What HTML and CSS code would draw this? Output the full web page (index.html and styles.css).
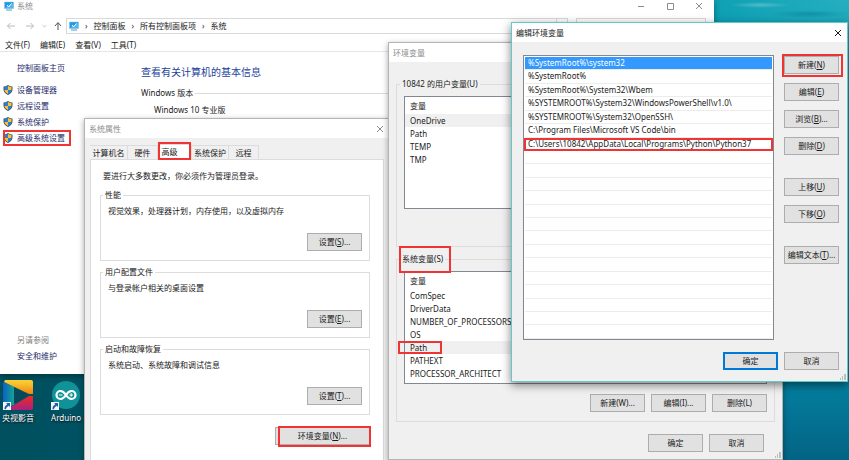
FILE: index.html
```html
<!DOCTYPE html>
<html lang="zh-CN">
<head>
  <meta charset="UTF-8">
  <title>编辑环境变量</title>
  <link rel="stylesheet" href="styles.css">
</head>
<body>

  <svg class="defs" width="0" height="0" aria-hidden="true">
    <symbol id="monitor" viewBox="0 0 20 18">
      <path d="M1 1h18v13H1z" fill="#1e9be8" stroke="#8fb8d4"/>
      <path d="M2 13L18 3v10z" fill="#54b6f0"/>
      <path d="M6 7l3 4 6-7" fill="none" stroke="#fff" stroke-width="2"/>
      <path d="M4 17h12" stroke="#4d9fd4" stroke-width="2"/>
    </symbol>
    <symbol id="shield" viewBox="0 0 20 20">
      <path d="M10 0C7 2 4 3 1 3v6c0 5 4 9 9 11 5-2 9-6 9-11V3c-3 0-6-1-9-3z" fill="#33567f"/>
      <path d="M10 2C8 3 5 4 3 4v6h7z" fill="#2f80cf"/>
      <path d="M10 2c2 1 5 2 7 2v6h-7z" fill="#f8c22c"/>
      <path d="M3 10h7v8c-4-2-7-5-7-8z" fill="#f8c22c"/>
      <path d="M10 10h7c0 3-3 6-7 8z" fill="#2f80cf"/>
    </symbol>
    <symbol id="close" viewBox="0 0 10 10">
      <path d="M2 2l6 6M8 2l-6 6" fill="none" stroke="currentColor"/>
    </symbol>
    <symbol id="shortcut" viewBox="0 0 8 8">
      <path d="M0 0h8v8H0z" fill="#f4f7fa"/>
      <path d="M3 1h4v4L5.7 3.7C4.3 4.5 3.3 5.500 3 7.200H1.5C1.3 5 2.5 3.3 4.3 2.3z" fill="#1d5fae"/>
    </symbol>
  </svg>

  <main class="desktop">

    <div class="shortcuts">
      <a class="shortcut" href="#">
        <svg viewBox="0 0 30 30">
          <defs>
            <linearGradient id="gy" x2="0" y2="1"><stop stop-color="#fcd737"/><stop offset="1" stop-color="#ef8410"/></linearGradient>
            <linearGradient id="gr" x2="0" y2="1"><stop stop-color="#f02a23"/><stop offset="1" stop-color="#a82281"/></linearGradient>
            <linearGradient id="gb"><stop stop-color="#0b62c4"/><stop offset="1" stop-color="#17a98d"/></linearGradient>
          </defs>
          <path d="M0 2l12 5v17L2 30H0z" fill="url(#gb)"/>
          <path d="M11 6l14 9-14 9z" fill="#06495c"/>
          <path d="M2 0h26a2 2 0 0 1 2 2v12L26 14 1 2z" fill="url(#gy)"/>
          <path d="M30 16v12a2 2 0 0 1-2 2H3L26 16z" fill="url(#gr)"/>
          <use href="#shortcut" x="0" y="22" width="8" height="8"/>
        </svg>
        <span>央视影音</span>
      </a>
      <a class="shortcut" href="#">
        <svg viewBox="0 0 30 30">
          <circle cx="15" cy="15" r="14" fill="#109299"/>
          <path d="M15 15c-2-3-3-4-5.5-4a4 4 0 0 0 0 8c2.5 0 3.5-1 5.5-4s3-4 5.5-4a4 4 0 0 1 0 8C18 19 17 18 15 15z" fill="none" stroke="#fff" stroke-width="2.2"/>
          <path d="M8 15h3.5M18.5 15H22M20.2 13.2v3.5" stroke="#fff"/>
          <use href="#shortcut" x="0" y="22" width="8" height="8"/>
        </svg>
        <span>Arduino</span>
      </a>
    </div>

    <section class="window system">
      <header class="titlebar">
        <svg class="icon"><use href="#monitor"/></svg>
        <h2>系统</h2>
        <button class="caption" aria-label="最小化"><svg viewBox="0 0 10 10"><path d="M2 5.5h6" stroke="currentColor"/></svg></button>
        <button class="caption" aria-label="最大化"><svg viewBox="0 0 10 10"><path d="M2.5 2.5h6v6h-6z" fill="none" stroke="currentColor"/></svg></button>
        <button class="caption" aria-label="关闭"><svg><use href="#close"/></svg></button>
      </header>
      <div class="addressbar">
        <button class="nav" aria-label="后退"><svg viewBox="0 0 10 10"><path d="M9 5H1.5M4.5 2l-3 3 3 3"/></svg></button>
        <button class="nav" aria-label="前进"><svg viewBox="0 0 10 10"><path d="M1 5h7.5M5.5 2l3 3-3 3"/></svg></button>
        <button class="nav recent" aria-label="最近"><svg viewBox="0 0 10 10"><path d="M3 4l2 2 2-2"/></svg></button>
        <button class="nav up" aria-label="向上"><svg viewBox="0 0 10 10"><path d="M5 9V2M2 5l3-3.5L8 5"/></svg></button>
        <nav class="crumbs">
          <svg class="icon"><use href="#monitor"/></svg>
          <i>›</i><a href="#">控制面板</a>
          <i>›</i><a href="#">所有控制面板项</a>
          <i>›</i><a href="#">系统</a>
          <button class="refresh" aria-label="刷新"></button>
        </nav>
        <input class="search" type="search" aria-label="搜索控制面板">
      </div>
      <div class="menubar">
        <button>文件(F)</button>
        <button>编辑(E)</button>
        <button>查看(V)</button>
        <button>工具(T)</button>
      </div>
      <div class="system-body">
        <aside class="sidebar">
          <a class="home" href="#">控制面板主页</a>
          <a href="#"><svg class="icon"><use href="#shield"/></svg>设备管理器</a>
          <a href="#"><svg class="icon"><use href="#shield"/></svg>远程设置</a>
          <a href="#"><svg class="icon"><use href="#shield"/></svg>系统保护</a>
          <a class="mark mark-link" href="#"><svg class="icon"><use href="#shield"/></svg>高级系统设置</a>
          <p class="see-also">另请参阅</p>
          <a class="plain" href="#">安全和维护</a>
        </aside>
        <article class="info">
          <h1>查看有关计算机的基本信息</h1>
          <h3>Windows 版本</h3>
          <p>Windows 10 专业版</p>
        </article>
      </div>
    </section>

    <section class="window props">
      <header class="titlebar">
        <h2>系统属性</h2>
        <button class="caption" aria-label="关闭"><svg><use href="#close"/></svg></button>
      </header>
      <div class="tabs">
        <button>计算机名</button>
        <button>硬件</button>
        <button class="active mark mark-tab">高级</button>
        <button>系统保护</button>
        <button>远程</button>
      </div>
      <div class="tab-page">
        <p class="notice">要进行大多数更改，你必须作为管理员登录。</p>
        <fieldset>
          <legend>性能</legend>
          <p>视觉效果，处理器计划，内存使用，以及虚拟内存</p>
          <button class="btn">设置(<u>S</u>)...</button>
        </fieldset>
        <fieldset>
          <legend>用户配置文件</legend>
          <p>与登录帐户相关的桌面设置</p>
          <button class="btn">设置(<u>E</u>)...</button>
        </fieldset>
        <fieldset>
          <legend>启动和故障恢复</legend>
          <p>系统启动、系统故障和调试信息</p>
          <button class="btn">设置(<u>T</u>)...</button>
        </fieldset>
        <button class="btn env-btn mark mark-env">环境变量(<u>N</u>)...</button>
      </div>
    </section>

    <section class="window vars">
      <header class="titlebar">
        <h2>环境变量</h2>
      </header>
      <div class="vars-body">
        <fieldset>
          <legend>10842 的用户变量(U)</legend>
          <div class="table-box">
            <table>
              <thead><tr><th>变量</th></tr></thead>
              <tbody>
                <tr class="selected"><td>OneDrive</td></tr>
                <tr><td>Path</td></tr>
                <tr><td>TEMP</td></tr>
                <tr><td>TMP</td></tr>
              </tbody>
            </table>
          </div>
        </fieldset>
        <fieldset>
          <legend class="mark mark-legend">系统变量(S)</legend>
          <div class="table-box">
            <table>
              <thead><tr><th>变量</th></tr></thead>
              <tbody>
                <tr><td>ComSpec</td></tr>
                <tr><td>DriverData</td></tr>
                <tr><td>NUMBER_OF_PROCESSORS</td></tr>
                <tr><td>OS</td></tr>
                <tr class="selected"><td><span class="mark mark-path">Path</span></td></tr>
                <tr><td>PATHEXT</td></tr>
                <tr><td>PROCESSOR_ARCHITECT</td></tr>
              </tbody>
            </table>
          </div>
          <div class="actions">
            <button class="btn">新建(W)...</button>
            <button class="btn">编辑(I)...</button>
            <button class="btn">删除(L)</button>
          </div>
        </fieldset>
        <div class="actions confirm">
          <button class="btn">确定</button>
          <button class="btn">取消</button>
        </div>
      </div>
      <svg class="grip" viewBox="0 0 6 6"><path d="M4 0h2v6H4zM2 2h1v4H2zM0 4h1v2H0z"/></svg>
    </section>

    <section class="window edit">
      <header class="titlebar">
        <h2>编辑环境变量</h2>
        <button class="caption" aria-label="关闭"><svg><use href="#close"/></svg></button>
      </header>
      <div class="edit-body">
        <ul class="paths">
          <li class="current">%SystemRoot%\system32</li>
          <li>%SystemRoot%</li>
          <li>%SystemRoot%\System32\Wbem</li>
          <li>%SYSTEMROOT%\System32\WindowsPowerShell\v1.0\</li>
          <li>%SYSTEMROOT%\System32\OpenSSH\</li>
          <li>C:\Program Files\Microsoft VS Code\bin</li>
          <li class="mark mark-row">C:\Users\10842\AppData\Local\Programs\Python\Python37</li>
          <li></li><li></li><li></li><li></li><li></li><li></li><li></li>
          <li></li><li></li><li></li><li></li><li></li><li></li><li></li>
        </ul>
        <div class="side-buttons">
          <button class="btn mark mark-new">新建(<u>N</u>)</button>
          <button class="btn">编辑(<u>E</u>)</button>
          <button class="btn">浏览(<u>B</u>)...</button>
          <button class="btn">删除(<u>D</u>)</button>
          <button class="btn spaced">上移(<u>U</u>)</button>
          <button class="btn">下移(<u>O</u>)</button>
          <button class="btn spaced">编辑文本(<u>T</u>)...</button>
        </div>
      </div>
      <div class="actions confirm">
        <button class="btn default">确定</button>
        <button class="btn">取消</button>
      </div>
      <svg class="grip" viewBox="0 0 6 6"><path d="M4 0h2v6H4zM2 2h1v4H2zM0 4h1v2H0z"/></svg>
    </section>

  </main>

</body>
</html>
```

FILE: styles.css
```css
* {
  box-sizing: border-box;
  margin: 0;
  padding: 0;
}

body {
  font: 8px/12px "Noto Sans", "Noto Sans CJK SC", sans-serif;
  color: #1a1a1a;
}

button,
input {
  font: inherit;
  color: inherit;
  background: none;
  border: 0;
}

a {
  color: inherit;
  text-decoration: none;
}

h1, h2, h3, th {
  font-weight: normal;
  font-size: inherit;
}

.defs {
  position: absolute;
}

.desktop {
  position: relative;
  height: 100vh;
  overflow: hidden;
  background:
    radial-gradient(ellipse 30px 3px at 760px 5px, rgba(255, 255, 255, 0.25), transparent),
    radial-gradient(ellipse 40px 4px at 810px 14px, rgba(0, 110, 140, 0.4), transparent),
    radial-gradient(ellipse 140px 60px at 100% 0, rgba(60, 190, 205, 0.5), transparent),
    linear-gradient(90deg, #00505f 0, #00566a 40%, transparent 85%),
    linear-gradient(#0ea0b4, #0791ac 50%, #047c9c 85%, #036384);
}

.icon {
  width: 10px;
  height: 10px;
  flex: none;
}

/* desktop shortcuts */
.shortcuts {
  position: absolute;
  left: 0;
  top: 380px;
  display: flex;
  gap: 12px;
}

.shortcut {
  width: 36px;
  display: flex;
  flex-direction: column;
  align-items: center;
  gap: 2px;
  color: #fff;
  text-shadow: 0 1px 2px #000;
}

.shortcut svg {
  width: 30px;
  height: 30px;
}

/* windows */
.window {
  position: absolute;
  display: flex;
  flex-direction: column;
  background: #f0f0f0;
  border: 1px solid #b4b4b4;
  box-shadow: 0 2px 6px rgba(0, 0, 0, 0.35);
}

.titlebar {
  display: flex;
  align-items: center;
  height: 19px;
  padding: 0 4px;
  background: #fff;
  color: #8c8c8c;
  flex: none;
}

.titlebar h2 {
  flex: 1;
}

.caption {
  display: flex;
}

.caption svg {
  width: 10px;
  height: 10px;
}

.btn {
  min-width: 55px;
  height: 18px;
  border: 1px solid #adadad;
  background: #e1e1e1;
  white-space: nowrap;
}

.btn.default {
  border: 2px solid #0078d7;
}

.actions {
  display: flex;
  justify-content: flex-end;
  gap: 6px;
}

.grip {
  position: absolute;
  right: 1px;
  bottom: 1px;
  width: 6px;
  height: 6px;
  fill: #bdbdbd;
}

fieldset {
  border: 1px solid #dcdcdc;
}

legend {
  padding: 0 2px;
}

/* red highlight boxes */
.mark {
  position: relative;
}

.mark::after {
  content: "";
  position: absolute;
  border: 2px solid #f03434;
  pointer-events: none;
}

.mark-link::after {
  inset: 0 14px 0 3px;
}

.mark-tab::after {
  inset: -3px 0 -1px;
}

.mark-env::after {
  inset: -2px -2px -3px 2px;
}

.mark-legend::after {
  inset: -7px -6px -8px -1px;
}

.mark-path::after {
  inset: -1px -15px -1px -12px;
}

.mark-row::after {
  inset: 0 -1px -1px;
}

.mark-new::after {
  inset: -3px -5px -4px -3px;
}

/* control panel window */
.system {
  left: 0;
  top: 0;
  width: 714px;
  height: 374px;
  background: #fff;
  border: 0;
}

.system .titlebar {
  height: 12px;
  gap: 3px;
  padding-right: 10px;
}

.system .caption {
  margin-left: 16px;
}

.addressbar {
  display: flex;
  align-items: center;
  height: 16px;
  margin-top: 6px;
  padding: 0 8px 0 6px;
}

.nav {
  width: 19px;
  display: flex;
  color: #bbb;
}

.nav svg {
  width: 10px;
  height: 10px;
  fill: none;
  stroke: currentColor;
}

.nav.recent {
  width: 9px;
  margin-left: -4px;
}

.nav.up {
  width: 13px;
  margin-left: 4px;
  color: #555;
}

.crumbs {
  flex: 1;
  display: flex;
  align-items: center;
  gap: 6px;
  height: 16px;
  padding-left: 2px;
  border: 1px solid #d9d9d9;
}

.crumbs i {
  font-style: normal;
}

.refresh {
  width: 11px;
  height: 14px;
  margin-left: auto;
  border-left: 1px solid #d9d9d9;
}

.search {
  width: 130px;
  height: 16px;
  margin-left: 8px;
  border: 1px solid #d9d9d9;
}

.menubar {
  display: flex;
  gap: 10px;
  height: 18px;
  padding: 5px 5px 0;
  border-bottom: 1px solid #e6e6e6;
}

.menubar button {
  height: 12px;
}

.system-body {
  flex: 1;
  display: flex;
}

.sidebar {
  width: 85px;
  padding-top: 8px;
  display: flex;
  flex-direction: column;
  color: #1c2a6b;
}

.sidebar a {
  display: flex;
  align-items: center;
  gap: 4px;
  height: 16px;
  padding-left: 3px;
}

.sidebar .home {
  margin-bottom: 6px;
}

.sidebar .home,
.sidebar .plain {
  padding-left: 17px;
}

.see-also {
  margin-top: auto;
  padding-left: 17px;
  line-height: 16px;
  color: #808080;
}

.sidebar .plain {
  margin-bottom: 10px;
}

.info {
  flex: 1;
  padding: 12px 8px 0 56px;
}

.info h1 {
  font-size: 10px;
  line-height: 16px;
  color: #1d3f9a;
}

.info h3 {
  display: flex;
  align-items: center;
  gap: 2px;
  margin-top: 7px;
}

.info h3::after {
  content: "";
  flex: 1;
  border-top: 1px solid #dcdcdc;
}

.info p {
  margin: 5px 13px;
}

/* system properties */
.props {
  left: 84px;
  top: 118px;
  width: 306px;
  height: 360px;
}

.tabs {
  display: flex;
  align-items: flex-end;
  height: 21px;
  padding: 0 5px;
}

.tabs button {
  height: 14px;
  min-width: 30px;
  padding: 0 2px;
  border: 1px solid #dcdcdc;
  border-width: 1px 1px 0 0;
}

.tabs button:first-child {
  min-width: 38px;
}

.tabs .active {
  height: 15px;
  min-width: 34px;
  padding-right: 12px;
  background: #fff;
}

.tab-page {
  flex: 1;
  margin: 0 5px;
  padding: 10px 13px 0 9px;
  background: #fff;
  border: 1px solid #dcdcdc;
  display: flex;
  flex-direction: column;
}

.notice {
  padding-left: 3px;
  margin-bottom: 7px;
}

.tab-page fieldset {
  height: 72px;
  margin-bottom: 5px;
  padding: 4px 7px 0;
  display: flex;
  flex-direction: column;
}

.tab-page legend {
  margin-left: -5px;
}

.tab-page fieldset .btn {
  margin-top: 16px;
  align-self: flex-end;
}

.env-btn {
  width: 95px;
  margin-top: 7px;
  align-self: flex-end;
}

/* environment variables */
.vars {
  left: 388px;
  top: 42px;
  width: 395px;
  height: 418px;
}

.vars-body {
  padding: 16px 7px 0;
}

.vars fieldset {
  height: 169px;
  margin-bottom: 6px;
  padding: 6px 7px 0;
}

.vars legend {
  margin-left: -4px;
}

.table-box {
  height: 113px;
  border: 1px solid #828790;
  background: #fff;
}

.vars table {
  width: 100%;
  border-collapse: collapse;
}

.vars th,
.vars td {
  height: 13px;
  padding-left: 5px;
  text-align: left;
}

.vars th {
  height: 17px;
}

.vars .selected {
  background: #f0f0f0;
}

.vars fieldset .actions {
  margin-top: 10px;
}

.vars .confirm {
  margin-top: 12px;
  padding-right: 11px;
}

/* edit environment variable */
.edit {
  left: 511px;
  top: 22px;
  width: 337px;
  height: 360px;
  border-color: #62c8c8;
  box-shadow: 0 3px 9px rgba(0, 0, 0, 0.5);
}

.edit .titlebar {
  color: #1a1a1a;
}

.edit-body {
  display: flex;
  gap: 10px;
  padding: 13px 8px 0 11px;
}

.paths {
  flex: 1;
  height: 285px;
  padding: 1px 1px 0;
  border: 1px solid #828790;
  background: #fff;
  list-style: none;
  display: flex;
  flex-direction: column;
}

.paths li {
  flex: 1;
  padding-left: 3px;
  border-bottom: 1px solid #ececec;
}

.paths .current {
  background: #3399ff;
  color: #fff;
}

.side-buttons {
  padding-top: 1px;
  display: flex;
  flex-direction: column;
  gap: 9px;
}

.side-buttons .spaced {
  margin-top: 14px;
}

.edit .confirm {
  margin-top: 12px;
  padding-right: 8px;
}
```
